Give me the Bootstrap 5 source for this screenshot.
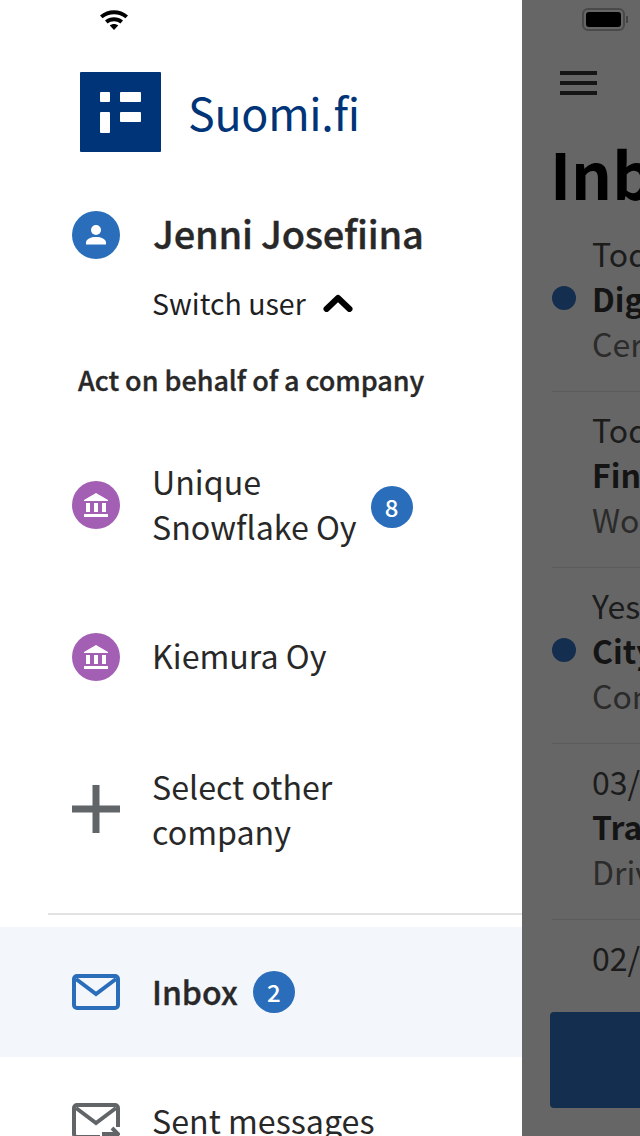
<!DOCTYPE html>
<html lang="en">
<head>
  <meta charset="UTF-8" />
  <meta name="viewport" content="width=device-width, initial-scale=1" />
  <title>Suomi.fi menu</title>
  <link href="https://cdn.jsdelivr.net/npm/bootstrap@5.3.0/dist/css/bootstrap.min.css" rel="stylesheet" />
  <style>
    html, body { height: 1136px; overflow: hidden; }
    body { font-family: "Noto Sans CJK SC", "Noto Sans", sans-serif; font-size: 32px; line-height: 45px; color: #282828; }
    .app-shell { height: 1136px; }
    .side-panel { width: 522px; flex: none; background: #fff; overflow: hidden; }
    .status-side { height: 40px; padding: 8px 0 0 99px; }
    .logo-row { padding: 32px 0 0 80px; gap: 27px; }
    .logo-box { width: 81px; height: 80px; background: #003479; border-radius: 1px; }
    .logo-text { font-size: 44.8px; line-height: 80px; color: #003479; letter-spacing: -.3px; }
    .user-row { padding: 59px 0 0 72px; gap: 33px; height: 107px; }
    .round-icon { width: 48px; height: 48px; border-radius: 50%; flex: none; }
    .ic-blue { background: #2a6ebb; }
    .ic-purple { background: #a25fb3; }
    .semi-text { font-weight: 500; -webkit-text-stroke: .35px currentColor; }
    .user-name { font-size: 38px; line-height: 48px; letter-spacing: -.2px; margin-top: -2px; }
    .switch-row { padding: 0 0 0 152px; height: 45px; margin-top: 21px; gap: 17px; color: #1f1f1f; font-size: 28.5px; }
    .act-title { padding: 0 0 0 78px; font-size: 27px; line-height: 40px; letter-spacing: -.04px; margin-top: 35px; }
    .co-row { padding-left: 72px; gap: 32px; }
    .co-name { font-size: 32.2px; line-height: 45px; }
    .row-unique { margin-top: 60px; }
    .row-unique .co-name { margin: -1px 0 1px; }
    .row-kiemura { margin-top: 83px; }
    .row-kiemura .co-name { margin: -2px 0 2px; }
    .row-select { margin-top: 83px; }
    .row-sent { margin-top: 41px; }
    .count-dot { width: 42px; height: 42px; border-radius: 50%; background: #2a6ebb; color: #fff; font-size: 24px; line-height: 42px; font-weight: 500; text-align: center; flex: none; }
    .count-company { margin-left: -18px; margin-top: 4px; }
    .rule-line { height: 2px; margin: 59px 0 0 48px; background: #e2e2e2; }
    .inbox-row { height: 130px; background: #f3f6fb; padding-left: 72px; margin-top: 12px; }
    .inbox-label { margin: -1px 15px 1px 32px; }
    .main-panel { flex: 1 1 auto; min-width: 0; background: #666; overflow: hidden; position: relative; white-space: nowrap; }
    .status-main { height: 40px; padding: 8px 0 0 60px; }
    .burger { padding: 31px 0 0 38px; height: 55px; }
    .burger span { display: block; width: 37px; height: 4px; background: #151515; margin-bottom: 6px; }
    .page-title { font-size: 64px; line-height: 80px; font-weight: 700; color: #000; margin: 37px 0 19px 28px; }
    .mail-row { margin-left: 30px; padding: 0 0 25px 40px; border-bottom: 1px solid #5b5b5b; position: relative; margin-bottom: 15px; }
    .mail-row div { line-height: 45px; }
    .mail-date { color: #1c1c1c; }
    .mail-last { margin-left: 70px; }
    .mail-subj { color: #141414; font-weight: 700; }
    .mail-sub { color: #2b2b2b; }
    .unread-dot { position: absolute; left: 0; top: 55px; width: 24px; height: 24px; border-radius: 50%; background: #142e4f; }
    .bottom-btn { position: absolute; left: 28px; top: 1012px; width: 200px; height: 96px; background: #142e4f; border-radius: 4px; }
  </style>
</head>
<body>

<div class="app-shell d-flex">
  <aside class="side-panel">
    <div class="status-side">
      <svg class="d-block" width="30" height="22" viewBox="0 0 30 22"><path d="M1 7.500C9 .5 21 .5 29 7.500l-2.600 2.800C20 4.800 10 4.800 3.600 10.300z M6 12.600c5.200-4.400 12.800-4.400 18 0l-2.600 2.800c-3.800-3-9-3-12.800 0z M10.800 17.500c2.500-2 5.900-2 8.400 0L15 22z" fill="#000"/></svg>
    </div>

    <div class="logo-row d-flex align-items-center">
      <div class="logo-box d-flex align-items-center justify-content-center">
        <svg width="41" height="41" viewBox="0 0 41 41" fill="#fff"><rect x="0" y="0" width="10" height="10" rx="1"/><rect x="20" y="0" width="21" height="10" rx="1"/><rect x="0" y="20" width="10" height="21" rx="1"/><rect x="20" y="20" width="21" height="10" rx="1"/></svg>
      </div>
      <div class="logo-text">Suomi.fi</div>
    </div>

    <div class="user-row d-flex align-items-start">
      <div class="round-icon ic-blue d-flex align-items-center justify-content-center">
        <svg width="22" height="22" viewBox="0 0 22 22" fill="#fff"><circle cx="11" cy="6" r="5"/><path d="M1 20.500v-2C1 15 6 13 11 13s10 2 10 5.500v2z"/></svg>
      </div>
      <div class="user-name semi-text">Jenni Josefiina</div>
    </div>

    <div class="switch-row d-flex align-items-center">
      <span>Switch user</span>
      <svg width="30" height="18" viewBox="0 0 30 18"><path d="M3.500 15 15 4l11.500 11" fill="none" stroke="#000" stroke-width="6" stroke-linecap="round" stroke-linejoin="round"/></svg>
    </div>

    <div class="act-title semi-text">Act on behalf of a company</div>

    <div class="co-row row-unique d-flex align-items-center">
      <div class="round-icon ic-purple d-flex align-items-center justify-content-center">
        <svg width="26" height="26" viewBox="0 0 26 26" fill="#fff"><path d="M13 1 25 8v1H1V8z"/><rect x="3" y="11" width="4" height="9"/><rect x="11" y="11" width="4" height="9"/><rect x="19" y="11" width="4" height="9"/><rect x="1" y="22" width="24" height="3"/></svg>
      </div>
      <div class="co-name">Unique<br>Snowflake Oy</div>
      <div class="count-dot count-company">8</div>
    </div>

    <div class="co-row row-kiemura d-flex align-items-center">
      <div class="round-icon ic-purple d-flex align-items-center justify-content-center">
        <svg width="26" height="26" viewBox="0 0 26 26" fill="#fff"><path d="M13 1 25 8v1H1V8z"/><rect x="3" y="11" width="4" height="9"/><rect x="11" y="11" width="4" height="9"/><rect x="19" y="11" width="4" height="9"/><rect x="1" y="22" width="24" height="3"/></svg>
      </div>
      <div class="co-name">Kiemura Oy</div>
    </div>

    <div class="co-row row-select d-flex align-items-center">
      <svg width="48" height="48" viewBox="0 0 48 48" fill="#626568"><rect x="20.500" y="0" width="7" height="48"/><rect x="0" y="20.500" width="48" height="7"/></svg>
      <div class="co-name">Select other<br>company</div>
    </div>

    <div class="rule-line"></div>

    <div class="inbox-row d-flex align-items-center">
      <svg width="48" height="36" viewBox="0 0 48 36" fill="none" stroke="#2a6ebb" stroke-width="4"><rect x="2" y="2" width="44" height="32" rx="3"/><path d="M4 5 24 20 44 5"/></svg>
      <span class="inbox-label semi-text">Inbox</span>
      <div class="count-dot">2</div>
    </div>

    <div class="co-row row-sent d-flex align-items-center">
      <svg width="48" height="36" viewBox="0 0 48 36" fill="none" stroke="#626568" stroke-width="4"><path d="M28 34H5a3 3 0 0 1-3-3V5a3 3 0 0 1 3-3h38a3 3 0 0 1 3 3v19"/><path d="M4 5 24 20 44 5"/><path d="M30 31h15M40 25l6 6-6 6"/></svg>
      <div class="co-name">Sent messages</div>
    </div>
  </aside>

  <main class="main-panel">
    <div class="status-main">
      <svg class="d-block" width="47" height="23" viewBox="0 0 47 23"><rect x="1" y="1" width="41" height="21" rx="5" fill="none" stroke="#4a4a4a" stroke-width="2"/><rect x="4" y="4" width="35" height="15" rx="3" fill="#000"/><rect x="44" y="8" width="2" height="7" fill="#444"/></svg>
    </div>
    <div class="burger"><span></span><span></span><span></span></div>
    <h1 class="page-title">Inbox</h1>

    <div class="mail-row">
      <span class="unread-dot"></span>
      <div class="mail-date">Today</div>
      <div class="mail-subj">Digital identity</div>
      <div class="mail-sub">Certificate</div>
    </div>
    <div class="mail-row">
      <div class="mail-date">Today</div>
      <div class="mail-subj">Finnish Tax</div>
      <div class="mail-sub">Workplace</div>
    </div>
    <div class="mail-row">
      <span class="unread-dot"></span>
      <div class="mail-date">Yesterday</div>
      <div class="mail-subj">City of Espoo</div>
      <div class="mail-sub">Confirmation</div>
    </div>
    <div class="mail-row">
      <div class="mail-date">03/02</div>
      <div class="mail-subj">Traficom</div>
      <div class="mail-sub">Driving licence</div>
    </div>
    <div class="mail-date mail-last">02/02</div>
    <div class="bottom-btn"></div>
  </main>
</div>

<script src="https://cdn.jsdelivr.net/npm/bootstrap@5.3.0/dist/js/bootstrap.bundle.min.js"></script>
</body>
</html>
